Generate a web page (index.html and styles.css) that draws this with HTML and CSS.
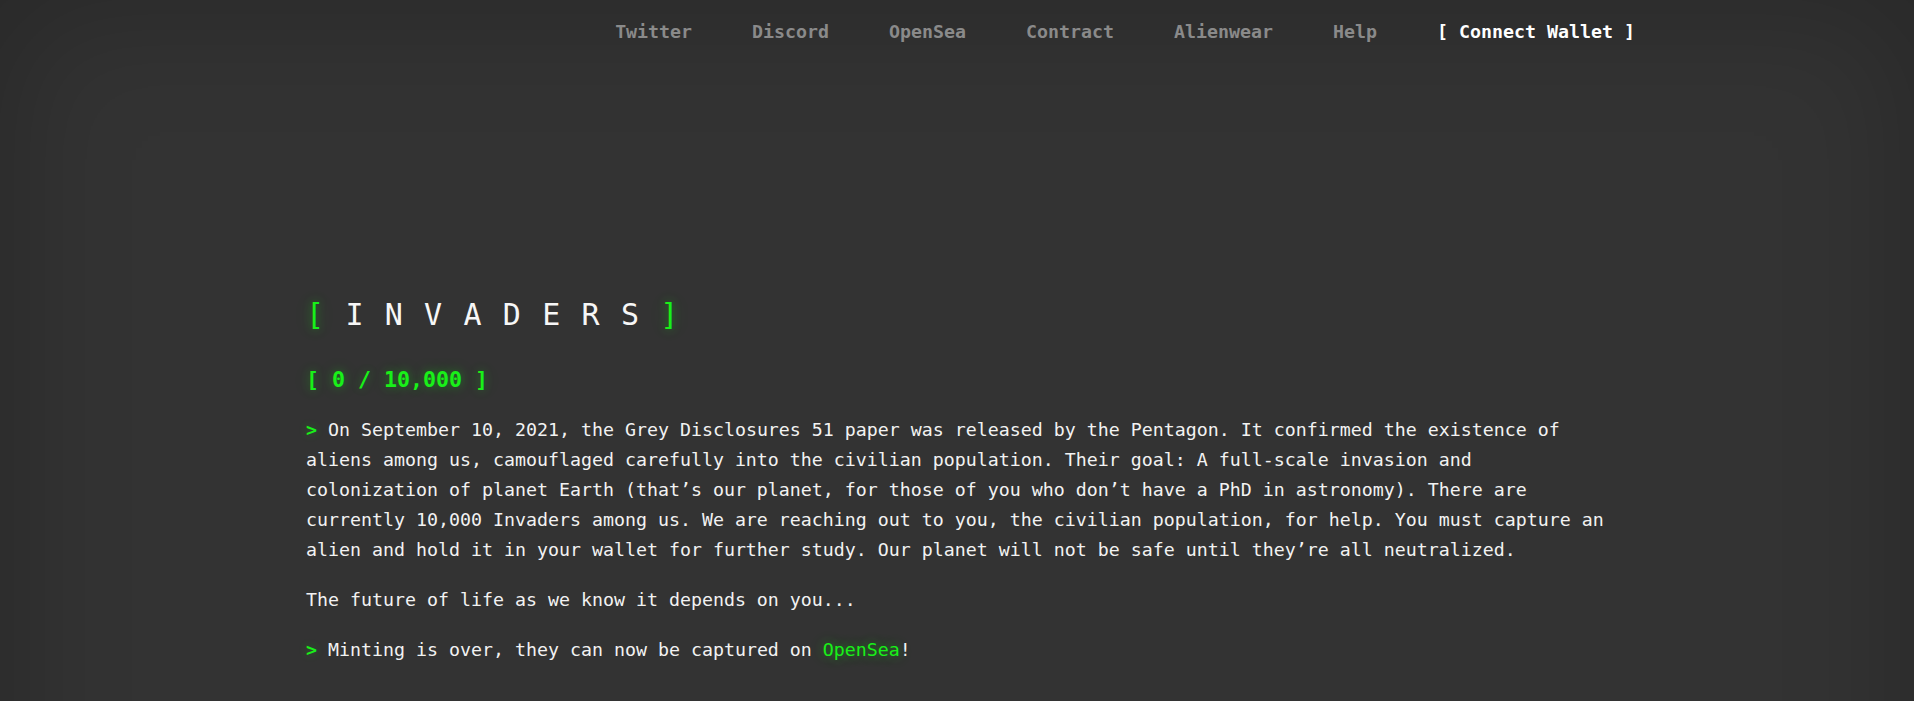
FILE: index.html
```html
<!DOCTYPE html>
<html lang="en">
<head>
<meta charset="utf-8">
<title>Invaders</title>
<link rel="stylesheet" href="styles.css">
</head>
<body>
<div class="screen">
  <header class="header">
    <nav class="nav">
      <a class="nav-link" href="#">Twitter</a>
      <a class="nav-link" href="#">Discord</a>
      <a class="nav-link" href="#">OpenSea</a>
      <a class="nav-link" href="#">Contract</a>
      <a class="nav-link" href="#">Alienwear</a>
      <a class="nav-link" href="#">Help</a>
      <a class="nav-link nav-wallet" href="#">[ Connect Wallet ]</a>
    </nav>
  </header>
  <main class="hero">
    <h1 class="title"><span class="bracket">[</span>INVADERS<span class="bracket">]</span></h1>
    <div class="counter">[ 0 / 10,000 ]</div>
    <p class="text"><span class="prompt">&gt; </span>On September 10, 2021, the Grey Disclosures 51 paper was released by the Pentagon. It confirmed the existence of aliens among us, camouflaged carefully into the civilian population. Their goal: A full-scale invasion and colonization of planet Earth (that’s our planet, for those of you who don’t have a PhD in astronomy). There are currently 10,000 Invaders among us. We are reaching out to you, the civilian population, for help. You must capture an alien and hold it in your wallet for further study. Our planet will not be safe until they’re all neutralized.</p>
    <p class="text">The future of life as we know it depends on you...</p>
    <p class="text"><span class="prompt">&gt; </span>Minting is over, they can now be captured on <a class="glow-link" href="#">OpenSea</a>!</p>
  </main>
</div>
</body>
</html>
```
FILE: styles.css
```css
html, body {
  margin: 0;
  padding: 0;
  overflow: hidden;
  background: #333333;
}

body {
  font-family: "DejaVu Sans Mono", "Liberation Mono", monospace;
  color: #f2f2f2;
}

.screen {
  min-height: 1000px;
  background: #333333;
  box-shadow: inset 0 0 120px 16px rgba(0, 0, 0, 0.2);
}

.header {
  display: flex;
  justify-content: flex-end;
  padding: 17px 279px 0 0;
}

.nav {
  display: flex;
  gap: 60px;
}

.nav-link {
  font-size: 18.27px;
  line-height: 30px;
  font-weight: bold;
  color: #8a8a8a;
  text-decoration: none;
}

.nav-wallet {
  color: #ffffff;
}

.hero {
  width: 1300px;
  margin: 0 auto;
  padding-top: 248px;
  position: relative;
  left: -1px;
}

.title {
  margin: 0;
  font-size: 30px;
  line-height: 40px;
  font-weight: normal;
  letter-spacing: 21.3px;
  color: #f7f7f7;
}

.bracket {
  color: #19f019;
  text-shadow: 0 0 10px rgba(0, 255, 0, 0.35), 0 0 20px rgba(0, 255, 0, 0.2);
}

.counter {
  margin-top: 30px;
  font-size: 21.6px;
  line-height: 30px;
  font-weight: bold;
  color: #19f019;
  text-shadow: 0 0 10px rgba(0, 255, 0, 0.3), 0 0 20px rgba(0, 255, 0, 0.15);
}

.text {
  margin: 20px 0 0;
  font-size: 18.27px;
  line-height: 30px;
}

.prompt {
  color: #19f019;
  font-weight: bold;
  text-shadow: 0 0 8px rgba(0, 255, 0, 0.3);
}

.glow-link {
  color: #19f019;
  text-decoration: none;
  text-shadow: 0 0 10px rgba(0, 255, 0, 0.35), 0 0 20px rgba(0, 255, 0, 0.2);
}
```
